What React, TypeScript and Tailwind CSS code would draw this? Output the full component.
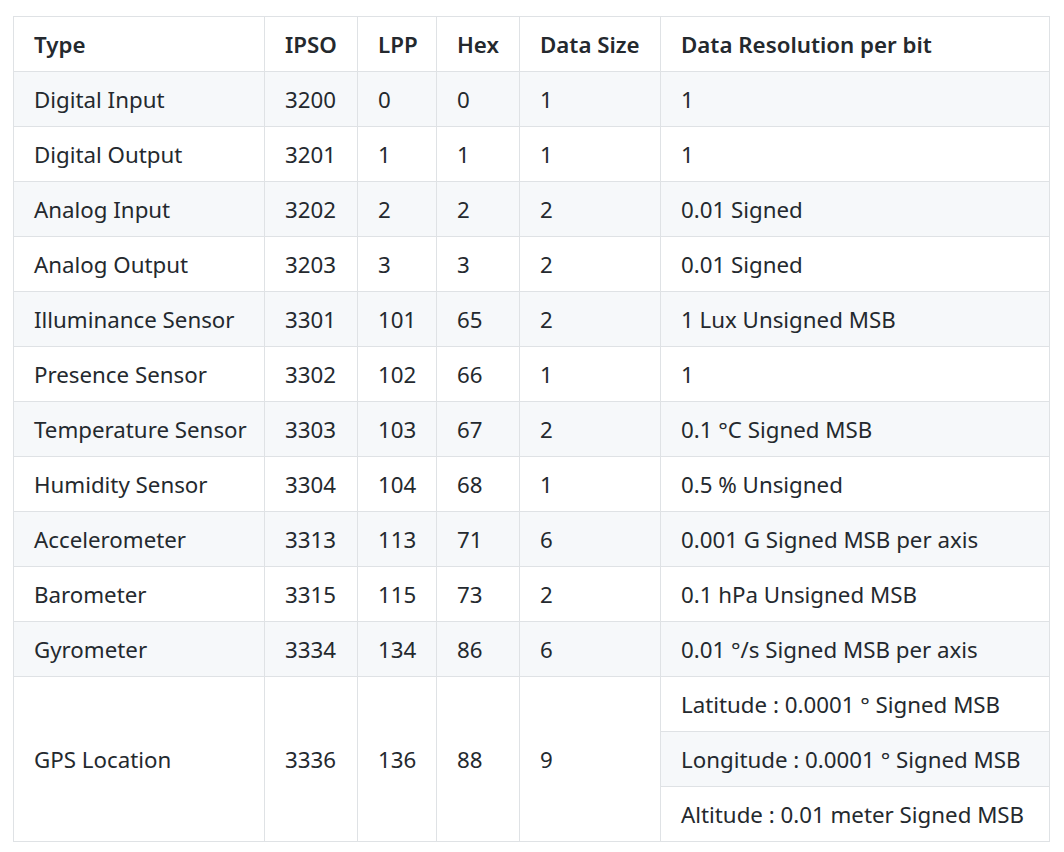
const ROWS = [
    ["Digital Input", "3200", "0", "0", "1", "1"],
    ["Digital Output", "3201", "1", "1", "1", "1"],
    ["Analog Input", "3202", "2", "2", "2", "0.01 Signed"],
    ["Analog Output", "3203", "3", "3", "2", "0.01 Signed"],
    ["Illuminance Sensor", "3301", "101", "65", "2", "1 Lux Unsigned MSB"],
    ["Presence Sensor", "3302", "102", "66", "1", "1"],
    ["Temperature Sensor", "3303", "103", "67", "2", "0.1 °C Signed MSB"],
    ["Humidity Sensor", "3304", "104", "68", "1", "0.5 % Unsigned"],
    ["Accelerometer", "3313", "113", "71", "6", "0.001 G Signed MSB per axis"],
    ["Barometer", "3315", "115", "73", "2", "0.1 hPa Unsigned MSB"],
    ["Gyrometer", "3334", "134", "86", "6", "0.01 °/s Signed MSB per axis"],
] as const;

const HEADERS = ["Type", "IPSO", "LPP", "Hex", "Data Size", "Data Resolution per bit"];

const cell =
    "border border-[#dfe2e5] h-[55px] px-5 pt-[2px] pb-0 text-left align-middle leading-[30px] whitespace-nowrap";

export default function App() {
    return (
        <div className="min-h-screen bg-white pl-[13px] pt-4 font-['Noto_Sans',sans-serif] text-[22.3px] text-[#24292e]">
            <table className="w-[1037px] table-fixed border-collapse">
                <colgroup>
                    <col className="w-[251px]" />
                    <col className="w-[93px]" />
                    <col className="w-[79px]" />
                    <col className="w-[83px]" />
                    <col className="w-[141px]" />
                    <col />
                </colgroup>
                <thead>
                    <tr className="bg-white">
                        {HEADERS.map((h) => (
                            <th key={h} className={`${cell} font-semibold`}>
                                {h}
                            </th>
                        ))}
                    </tr>
                </thead>
                <tbody>
                    {ROWS.map((row, i) => (
                        <tr key={row[0]} className={i % 2 === 0 ? "bg-[#f6f8fa]" : "bg-white"}>
                            {row.map((v, j) => (
                                <td key={j} className={cell}>
                                    {v}
                                </td>
                            ))}
                        </tr>
                    ))}
                    <tr className="bg-white">
                        <td rowSpan={3} className={cell}>GPS Location</td>
                        <td rowSpan={3} className={cell}>3336</td>
                        <td rowSpan={3} className={cell}>136</td>
                        <td rowSpan={3} className={cell}>88</td>
                        <td rowSpan={3} className={cell}>9</td>
                        <td className={cell}>Latitude : 0.0001 ° Signed MSB</td>
                    </tr>
                    <tr className="bg-[#f6f8fa]">
                        <td className={cell}>Longitude : 0.0001 ° Signed MSB</td>
                    </tr>
                    <tr className="bg-white">
                        <td className={cell}>Altitude : 0.01 meter Signed MSB</td>
                    </tr>
                </tbody>
            </table>
        </div>
    );
}
